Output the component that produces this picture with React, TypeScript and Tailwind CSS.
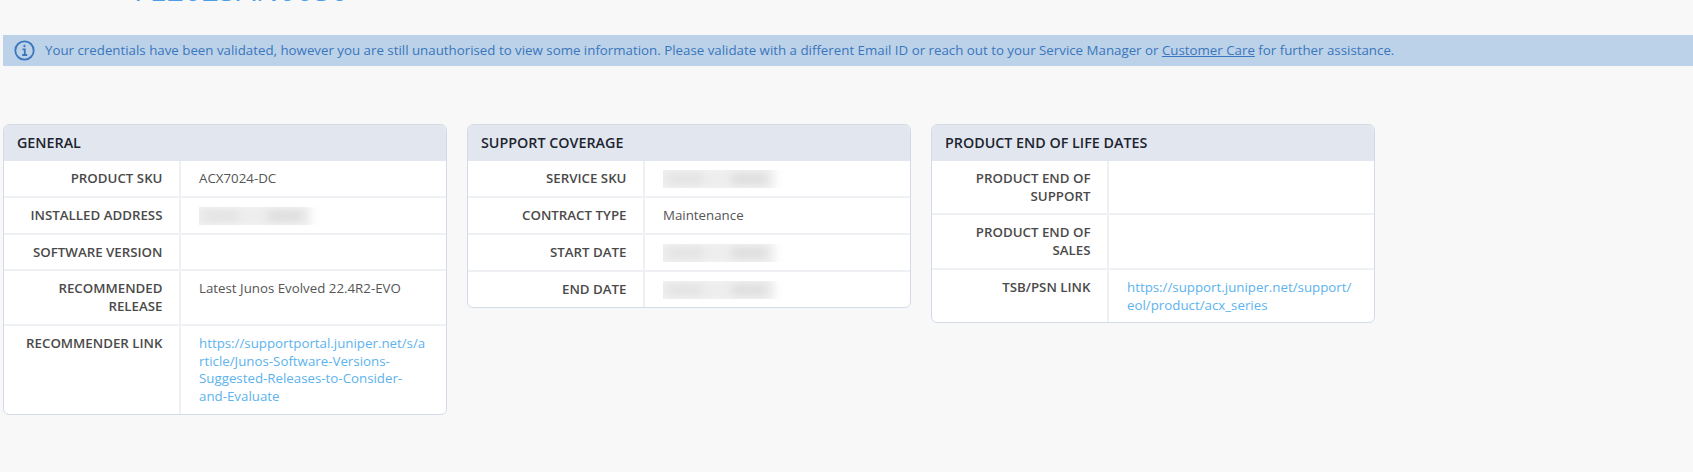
import { type ReactNode } from 'react';

type Row = { label: string; value?: ReactNode };

function Blurred() {
  return (
    <div className="relative h-[18px] w-[122px] overflow-hidden">
      <span className="absolute -left-[8px] -top-[4px] h-[26px] w-[120px] bg-[#eeeeee] blur-[4px]" />
      <span className="absolute left-[4px] top-[4px] h-[10px] w-[36px] rounded-full bg-[#e2e2e2] blur-[4px]" />
      <span className="absolute left-[68px] top-[4px] h-[10px] w-[36px] rounded-full bg-[#dcdcdc] blur-[4px]" />
    </div>
  );
}

function Link({ children }: { children: ReactNode }) {
  return <span className="break-all text-[#5cb3ee]">{children}</span>;
}

const general: Row[] = [
  { label: 'PRODUCT SKU', value: 'ACX7024-DC' },
  { label: 'INSTALLED ADDRESS', value: <Blurred /> },
  { label: 'SOFTWARE VERSION' },
  { label: 'RECOMMENDED RELEASE', value: 'Latest Junos Evolved 22.4R2-EVO' },
  {
    label: 'RECOMMENDER LINK',
    value: (
      <Link>
        https://supportportal.juniper.net/s/a
        <br />
        rticle/Junos-Software-Versions-
        <br />
        Suggested-Releases-to-Consider-
        <br />
        and-Evaluate
      </Link>
    ),
  },
];

const coverage: Row[] = [
  { label: 'SERVICE SKU', value: <Blurred /> },
  { label: 'CONTRACT TYPE', value: 'Maintenance' },
  { label: 'START DATE', value: <Blurred /> },
  { label: 'END DATE', value: <Blurred /> },
];

const endOfLife: Row[] = [
  { label: 'PRODUCT END OF SUPPORT' },
  { label: 'PRODUCT END OF SALES' },
  {
    label: 'TSB/PSN LINK',
    value: (
      <Link>
        https://support.juniper.net/support/
        <br />
        eol/product/acx_series
      </Link>
    ),
  },
];

function InfoCard({ title, rows }: { title: string; rows: Row[] }) {
  return (
    <div className="w-[444px] overflow-hidden rounded-[6px] border border-[#d3dce6] bg-white">
      <div className="flex h-[36px] items-center bg-[#e2e7ef] px-[13px] text-[14.3px] font-semibold text-[#1c2430]">
        {title}
      </div>
      {rows.map((row, i) => (
        <div key={row.label} className={i > 0 ? 'flex border-t-2 border-[#eef0f3]' : 'flex'}>
          <div className="w-[177px] shrink-0 border-r-2 border-[#eef0f3] pb-[8px] pl-[10px] pr-[16.5px] pt-[9px] text-right font-semibold text-[#4a4a4a]">
            {row.label}
          </div>
          <div className="min-h-[34.7px] flex-1 pb-[8px] pl-[18px] pr-[12px] pt-[9px] text-[#555555]">{row.value}</div>
        </div>
      ))}
    </div>
  );
}

export default function App() {
  return (
    <div className="h-[472px] w-[1693px] overflow-hidden bg-[#f8f8f8] font-['Open_Sans',sans-serif] text-[13.3px] leading-[17.7px]">
      <div className="mt-[-25px] h-[30px] pl-[134px] text-[30px] leading-[30px] tracking-[0.3px] text-[#4a9eea]">FE2023AN0030</div>
      <div className="ml-[3px] mt-[30px] flex h-[31px] items-center gap-[10px] bg-[#bcd2e8] pl-[11px] text-[#3a76bd]">
        <svg className="h-[21px] w-[21px] shrink-0" viewBox="0 0 21 21" fill="none" stroke="#3a76bd">
          <circle cx="10.5" cy="10.5" r="9.2" strokeWidth="1.8" />
          <path d="M8.5 9.4h2.3v5.4M8.2 15h5" strokeWidth="1.8" />
          <circle cx="10.5" cy="6" r="0.8" fill="#3a76bd" strokeWidth="0.9" />
        </svg>
        <p className="mt-px">
          Your credentials have been validated, however you are still unauthorised to view some information. Please validate with a different Email ID or reach out to your Service Manager or{' '}
          <span className="underline">Customer Care</span> for further assistance.
        </p>
      </div>
      <div className="ml-[3px] mt-[58px] flex items-start gap-[20px]">
        <InfoCard title="GENERAL" rows={general} />
        <InfoCard title="SUPPORT COVERAGE" rows={coverage} />
        <InfoCard title="PRODUCT END OF LIFE DATES" rows={endOfLife} />
      </div>
    </div>
  );
}
